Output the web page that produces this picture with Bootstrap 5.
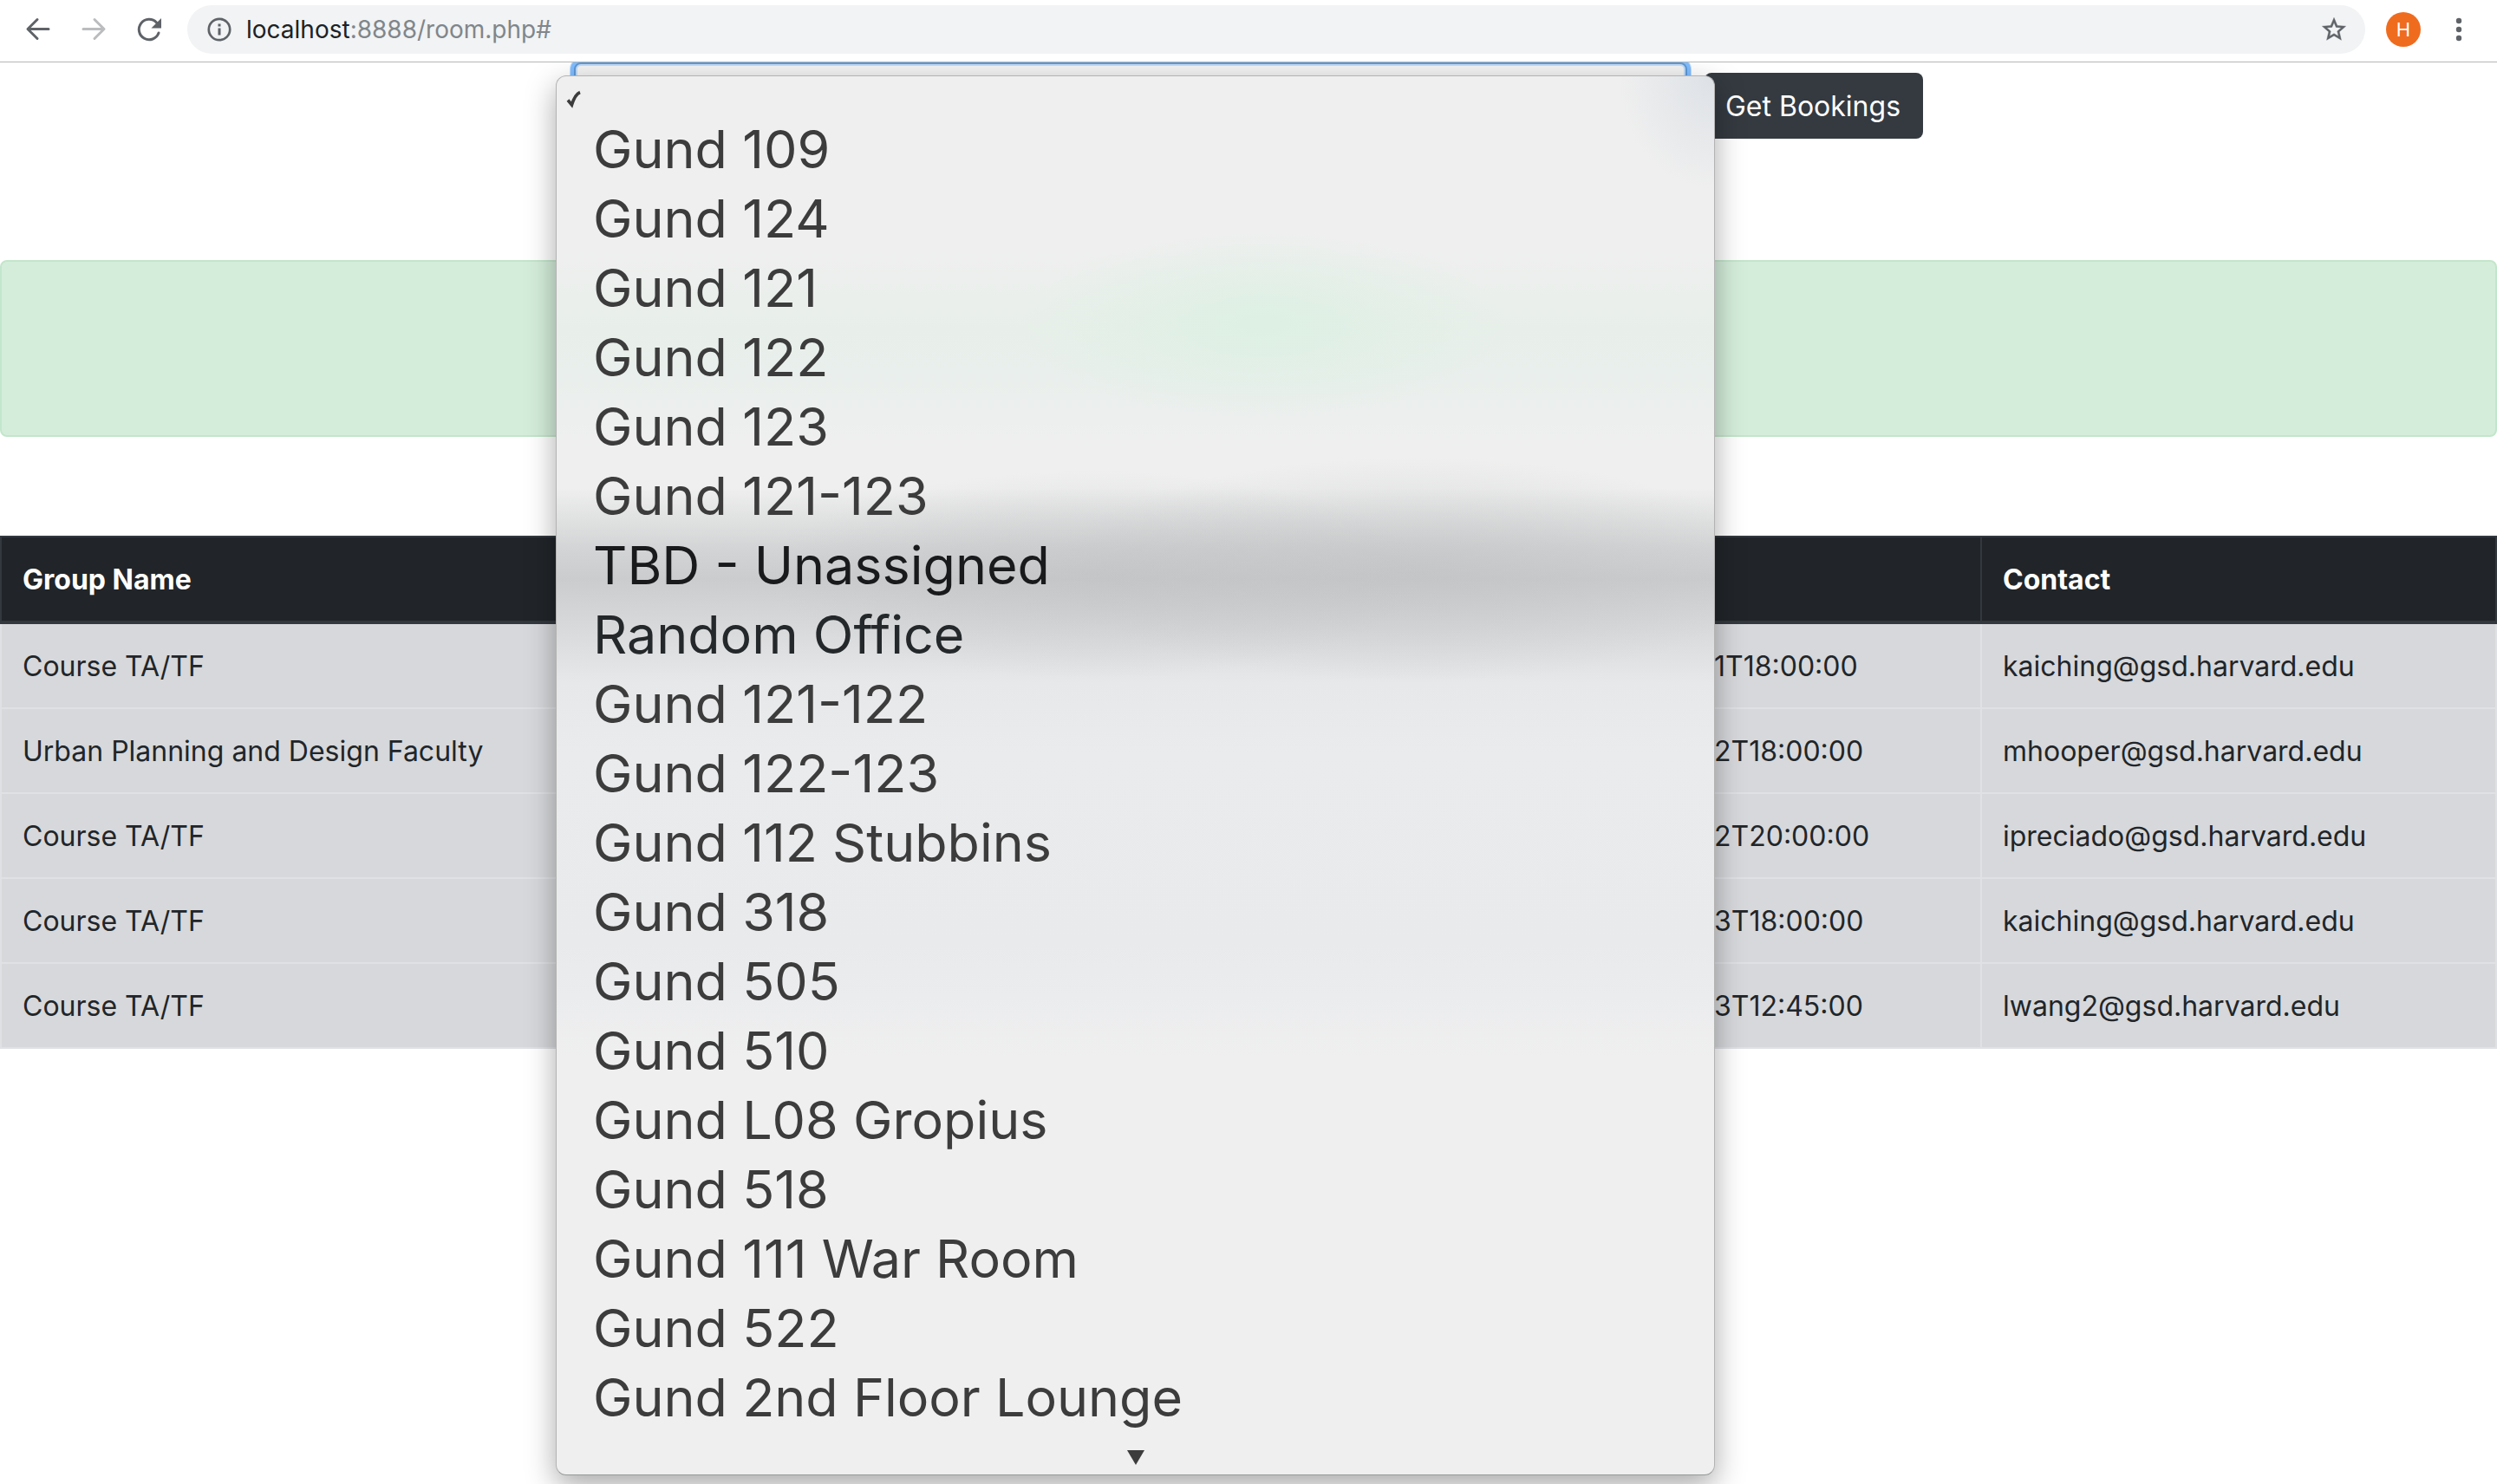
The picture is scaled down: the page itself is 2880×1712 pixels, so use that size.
<!DOCTYPE html>
<html lang="en">
<head>
<meta charset="utf-8">
<meta name="viewport" content="width=device-width, initial-scale=1">
<title>Room bookings</title>
<link href="https://cdn.jsdelivr.net/npm/bootstrap@5.3.0/dist/css/bootstrap.min.css" rel="stylesheet">
<style>
  body { min-height: 100vh; font-family: Inter, "Liberation Sans", sans-serif; font-size: 32px; line-height: 48px; color: #212529; background: #fff; }

  /* browser bar */
  .browser-bar { height: 72px; padding: 0 12px 3px; border-bottom: 1px solid #b4b6b5; background: #fff; position: relative; z-index: 5; }
  .bar-btn { width: 64px; height: 56px; padding: 0; border: 0; background: none; color: #5f6368; }
  .bar-btn:disabled { color: #babcbe; }
  .omnibox { height: 56px; margin-left: 12px; padding: 0 21px 0 22px; border-radius: 28px; background: #f1f3f4; }
  .omnibox .site-btn { width: 30px; height: 30px; padding: 0; border: 0; background: none; color: #5f6368; }
  .addr { margin-left: 16px; font-size: 28px; line-height: 40px; color: #80868b; }
  .addr b { font-weight: 400; color: #202124; }
  .avatar { width: 40px; height: 40px; margin: 0 12px 0 24px; padding: 0; border: 0; border-radius: 50%; background: #ef6c1f; color: #fff; font-size: 22px; line-height: 40px; }
  .browser-bar svg { display: block; margin: 0 auto; }

  /* room picker */
  .picker { gap: 20px; margin-bottom: 140px; }
  .room-field { width: 1284px; }
  .room-select { height: 88px; padding: 0 60px 0 24px; border: 2px solid #5f98d6; border-radius: 8px; font-size: 61px; color: #3c3c3c;
    background: #f4f4f4 url("data:image/svg+xml,%3Csvg xmlns='http://www.w3.org/2000/svg' viewBox='0 0 16 56'%3E%3Cpath fill='%23222' d='M8 0l7 16H1zM8 56l7-16H1z'/%3E%3C/svg%3E") no-repeat right 15px center / 16px 60px;
    box-shadow: 0 0 0 4px #80bdff, 0 0 0 5px #c4dffb, inset 0 0 0 2px #c1dbf7; }
  .btn-get { width: 252px; height: 76px; padding: 2px 2px 0 0; border: 0; border-radius: 8px; background: #343a40; color: #fff; font-size: 32px; line-height: 48px; }
  .btn-get:hover { background: #23272b; color: #fff; }

  .room-list { display: block; top: 15px; left: -21px; right: -32px; z-index: 3; padding: 0; margin: 0; border: 1px solid #b3b3b3; border-bottom-color: #969998; border-radius: 12px; overflow: hidden;
    font-size: 61px; box-shadow: 0 12px 34px rgba(0,0,0,.34);
    background-color: #efefef;
    background-image:
      radial-gradient(ellipse 110px 130px at 100% 0, #dde1e6, rgba(221,225,230,0)),
      radial-gradient(ellipse 280px 110px at 815px 285px, rgba(221,240,227,1), rgba(221,240,227,0)),
      radial-gradient(ellipse 380px 120px at 620px 575px, rgba(190,191,193,.5), rgba(190,191,193,0)),
      radial-gradient(ellipse 420px 130px at 990px 570px, rgba(190,191,193,.55), rgba(190,191,193,0)),
      linear-gradient(#efefef 200px, #e8efea 290px, #e9efec 340px, #efefef 430px, #eeefee 475px, #d3d4d5 545px, #cbccce 580px, #d9dadc 640px, #e7e8ea 700px, #eaebed 780px, #e9eaec 1000px, #ebecee 1060px, #efefef 1130px); }
  .room-list .dropdown-item { padding: 0 42px; font-size: 61px; line-height: 80px; color: #3c3c3c; }
  .room-list .dropdown-item:hover { background: rgba(0,0,0,.08); }
  .room-list .picked { height: 44px; padding: 9px 11px 0; line-height: 32px; }
  .room-list .dim { color: #181a1c; }
  .room-list .dim-soft { color: #25282a; }
  .more { height: 49px; padding-top: 21px; color: #3c3c3c; }
  .more svg, .picked svg { display: block; }

  /* notice and table */
  .notice { height: 204px; margin-bottom: 114px; border: 2px solid #c3e6cb; border-radius: 8px; background: #d4edda; }
  .bookings { --bs-table-bg: #d6d8db; --bs-table-color: #212529; table-layout: fixed; margin: 0; border-collapse: separate; border-spacing: 0; }
  .bookings > :not(caption) > * > * { height: 98px; padding: 25px 24px 23px; border: 0 solid #dfe1e5; border-width: 0 0 2px 2px; line-height: 48px; white-space: nowrap; color: #212529; background: #d6d8db; }
  .bookings > :not(caption) > * > :last-child { border-right-width: 2px; }
  .bookings > thead > tr > th { height: 102px; border-color: #32383e; border-top-width: 2px; border-bottom-width: 4px; background: #212529; color: #fff; font-weight: 700; }
  .c-group { width: 30%; } .c-contact { width: 596px; } .c-end { width: 333px; }
</style>
<script src="https://cdn.jsdelivr.net/npm/bootstrap@5.3.0/dist/js/bootstrap.bundle.min.js"></script>
</head>
<body>
<header class="browser-bar d-flex align-items-center">
  <button class="bar-btn" type="button" aria-label="Back"><svg width="32" height="32" viewBox="0 0 32 32" fill="none" stroke="currentColor" stroke-width="3" stroke-linecap="round" stroke-linejoin="round"><path d="M15 4.500L4 15.500l11 11M4.500 15.500H28"/></svg></button>
  <button class="bar-btn" type="button" aria-label="Forward" disabled><svg width="32" height="32" viewBox="0 0 32 32" fill="none" stroke="currentColor" stroke-width="3" stroke-linecap="round" stroke-linejoin="round"><path d="M17 4.500l11 11-11 11M27.500 15.500H4"/></svg></button>
  <button class="bar-btn" type="button" aria-label="Reload"><svg width="32" height="32" viewBox="0 0 32 32"><path d="M27 20A11.700 11.700 0 1 1 24.500 8" fill="none" stroke="currentColor" stroke-width="3" stroke-linecap="round"/><path d="M30 3v11.500H18.500z" fill="currentColor"/></svg></button>
  <div class="omnibox d-flex align-items-center flex-grow-1">
    <button class="site-btn" type="button" aria-label="Site information"><svg width="30" height="30" viewBox="0 0 30 30"><circle cx="15" cy="15" r="12.200" fill="none" stroke="currentColor" stroke-width="2.700"/><path d="M13.500 8.500h3v3h-3zM13.500 13.500h3v8h-3z" fill="currentColor"/></svg></button>
    <div class="addr flex-grow-1"><b>localhost</b>:8888/room.php#</div>
    <button class="site-btn" type="button" aria-label="Bookmark this page"><svg width="30" height="30" viewBox="1 1 22 22" fill="currentColor" stroke="currentColor" stroke-width=".3"><path d="M22 9.240l-7.190-.62L12 2 9.190 8.630 2 9.240l5.460 4.730L5.820 21 12 17.270 18.180 21l-1.630-7.030L22 9.240zM12 15.400l-3.760 2.270 1-4.280-3.320-2.880 4.380-.38L12 6.100l1.710 4.040 4.380.38-3.320 2.880 1 4.280L12 15.400z"/></svg></button>
  </div>
  <button class="avatar" type="button">H</button>
  <button class="bar-btn" type="button" aria-label="Menu"><svg width="8" height="28" viewBox="0 0 8 28" fill="currentColor"><circle cx="4" cy="4" r="3.200"/><circle cx="4" cy="14" r="3.200"/><circle cx="4" cy="24" r="3.200"/></svg></button>
</header>

<main>
  <form class="picker d-flex justify-content-center align-items-end">
    <div class="room-field position-relative">
      <select class="room-select form-select" aria-label="Room"><option></option></select>
      <div class="room-list dropdown-menu show">
        <button type="button" class="dropdown-item picked" aria-label="No room"><svg width="20" height="24" viewBox="0 0 20 24"><path d="M2 12.500L6.500 18C8.500 11.500 11 5.500 16 3.500" fill="none" stroke="#3c3c3c" stroke-width="3.600"/></svg></button>
        <button type="button" class="dropdown-item">Gund 109</button>
        <button type="button" class="dropdown-item">Gund 124</button>
        <button type="button" class="dropdown-item">Gund 121</button>
        <button type="button" class="dropdown-item">Gund 122</button>
        <button type="button" class="dropdown-item">Gund 123</button>
        <button type="button" class="dropdown-item">Gund 121-123</button>
        <button type="button" class="dropdown-item dim">TBD - Unassigned</button>
        <button type="button" class="dropdown-item dim-soft">Random Office</button>
        <button type="button" class="dropdown-item">Gund 121-122</button>
        <button type="button" class="dropdown-item">Gund 122-123</button>
        <button type="button" class="dropdown-item">Gund 112 Stubbins</button>
        <button type="button" class="dropdown-item">Gund 318</button>
        <button type="button" class="dropdown-item">Gund 505</button>
        <button type="button" class="dropdown-item">Gund 510</button>
        <button type="button" class="dropdown-item">Gund L08 Gropius</button>
        <button type="button" class="dropdown-item">Gund 518</button>
        <button type="button" class="dropdown-item">Gund 111 War Room</button>
        <button type="button" class="dropdown-item">Gund 522</button>
        <button type="button" class="dropdown-item">Gund 2nd Floor Lounge</button>
        <div class="more d-flex justify-content-center"><svg width="20" height="17" viewBox="0 0 20 17"><path d="M0 0h20L10 17z" fill="currentColor"/></svg></div>
      </div>
    </div>
    <button class="btn btn-get" type="button">Get Bookings</button>
  </form>

  <div class="notice" role="status"></div>

  <table class="bookings table">
    <colgroup><col class="c-group"><col><col class="c-end"><col class="c-contact"></colgroup>
    <thead><tr><th>Group Name</th><th></th><th></th><th>Contact</th></tr></thead>
    <tbody>
      <tr><td>Course TA/TF</td><td></td><td>1T18:00:00</td><td>kaiching@gsd.harvard.edu</td></tr>
      <tr><td>Urban Planning and Design Faculty</td><td></td><td>2T18:00:00</td><td>mhooper@gsd.harvard.edu</td></tr>
      <tr><td>Course TA/TF</td><td></td><td>2T20:00:00</td><td>ipreciado@gsd.harvard.edu</td></tr>
      <tr><td>Course TA/TF</td><td></td><td>3T18:00:00</td><td>kaiching@gsd.harvard.edu</td></tr>
      <tr><td>Course TA/TF</td><td></td><td>3T12:45:00</td><td>lwang2@gsd.harvard.edu</td></tr>
    </tbody>
  </table>
</main>
</body>
</html>
